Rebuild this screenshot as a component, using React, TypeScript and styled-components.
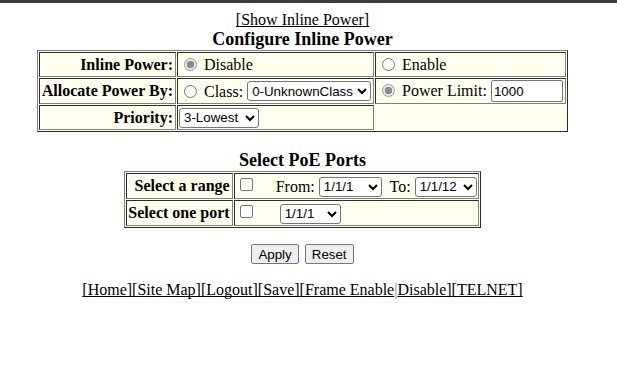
import styled, { createGlobalStyle } from "styled-components";

const GlobalStyle = createGlobalStyle`
  body {
    margin: 0;
    background: #ffffff;
    font-family: "Liberation Serif", "Times New Roman", serif;
    font-size: 16px;
    color: #000000;
  }
`;

const TopBar = styled.div`
  height: 3px;
  background: #3c3c3c;
`;

const Page = styled.div`
  padding: 8px 20px 8px 8px;
  text-align: center;
`;

const NavLink = styled.a`
  color: #000000;
  text-decoration: underline;
  text-decoration-skip-ink: none;
  cursor: pointer;
`;

const Heading = styled.div`
  font-size: 18px;
  font-weight: bold;
`;

const Grid = styled.table`
  margin: 0 auto;
  border: 1px outset #808080;
  border-spacing: 1px;
  background: #fffff0;
  text-align: left;
`;

const Label = styled.th<{ $w?: number; $h: number }>`
  box-sizing: border-box;
  width: ${(p) => (p.$w ? `${p.$w}px` : "auto")};
  height: ${(p) => p.$h}px;
  border: 1px inset #808080;
  padding: 1px 2px 1px 1px;
  text-align: right;
  white-space: nowrap;
`;

const Cell = styled.td<{ $w?: number; $h: number }>`
  box-sizing: border-box;
  width: ${(p) => (p.$w ? `${p.$w}px` : "auto")};
  height: ${(p) => p.$h}px;
  border: 1px inset #808080;
  padding: 1px;
  white-space: nowrap;
`;

const Radio = styled.input.attrs({ type: "radio" })`
  appearance: none;
  width: 13px;
  height: 13px;
  margin: 3px 3px 0 5px;
  border-radius: 50%;
  border: 1px solid #767676;
  background: #ffffff;
  vertical-align: -1px;
  &:checked {
    border-color: #9a9a9a;
    background: radial-gradient(circle, #8c8c8c 0 3.5px, #e8e8e8 4px);
  }
`;

const Check = styled.input.attrs({ type: "checkbox" })`
  appearance: none;
  width: 13px;
  height: 13px;
  margin: 3px 3px 3px 4px;
  border-radius: 2px;
  border: 1px solid #767676;
  background: #ffffff;
  vertical-align: -2px;
`;

const Select = styled.select<{ $w: number }>`
  width: ${(p) => p.$w}px;
  height: 20px;
  font-family: "Liberation Sans", Arial, sans-serif;
  font-size: 13.333px;
  border: 1px solid #767676;
  border-radius: 3px;
  background: #ffffff;
  color: #000000;
  padding: 0;
  vertical-align: 1px;
`;

const TextBox = styled.input`
  width: 72px;
  height: 22px;
  box-sizing: border-box;
  font-family: "Liberation Sans", Arial, sans-serif;
  font-size: 13.333px;
  border: 1px solid #767676;
  border-radius: 2px;
  padding: 1px 2px;
`;

const Gap = styled.div`
  height: 18px;
`;

const Buttons = styled.div`
  display: flex;
  justify-content: center;
  gap: 6px;
  margin-top: 16px;
`;

const Button = styled.button`
  font-family: "Liberation Sans", Arial, sans-serif;
  font-size: 13.333px;
  height: 20px;
  padding: 0 6px;
  background: #efefef;
  border: 1px solid #767676;
  border-radius: 2px;
  color: #000000;
`;

const Footer = styled.div`
  margin-top: 17px;
`;

const Sep = styled.span`
  color: #6a8fbf;
`;

const ports = Array.from({ length: 12 }, (_, i) => `1/1/${i + 1}`);

export default function App() {
  return (
    <>
      <GlobalStyle />
      <TopBar />
      <Page>
        <NavLink>[Show Inline Power]</NavLink>
        <Heading>Configure Inline Power</Heading>
        <Grid>
          <tbody>
            <tr>
              <Label $w={137} $h={25}>Inline Power:</Label>
              <Cell $w={197} $h={25}>
                <Radio name="power" defaultChecked /> Disable
              </Cell>
              <Cell $w={191} $h={25}>
                <Radio name="power" /> Enable
              </Cell>
            </tr>
            <tr>
              <Label $h={26}>Allocate Power By:</Label>
              <Cell $h={26}>
                <Radio name="alloc" /> Class:{" "}
                <Select $w={124} defaultValue="0">
                  <option value="0">0-UnknownClass</option>
                  <option value="1">1-Class1</option>
                  <option value="2">2-Class2</option>
                  <option value="3">3-Class3</option>
                </Select>
              </Cell>
              <Cell $h={26}>
                <Radio name="alloc" defaultChecked /> Power Limit:{" "}
                <TextBox defaultValue="1000" />
              </Cell>
            </tr>
            <tr>
              <Label $h={25}>Priority:</Label>
              <Cell $h={25}>
                <Select $w={80} defaultValue="3">
                  <option value="1">1-Critical</option>
                  <option value="2">2-High</option>
                  <option value="3">3-Lowest</option>
                </Select>
              </Cell>
            </tr>
          </tbody>
        </Grid>
        <Gap />
        <Heading>Select PoE Ports</Heading>
        <Grid>
          <tbody>
            <tr>
              <Label $w={106} $h={26}>Select a range</Label>
              <Cell $w={242} $h={26}>
                <Check />
                {"\u00a0\u00a0\u00a0\u00a0 "}From:{" "}
                <Select $w={63}>
                  {ports.map((p) => (
                    <option key={p}>{p}</option>
                  ))}
                </Select>
                {"\u00a0 "}To:{" "}
                <Select $w={62} defaultValue="1/1/12">
                  {ports.map((p) => (
                    <option key={p}>{p}</option>
                  ))}
                </Select>
              </Cell>
            </tr>
            <tr>
              <Label $h={26}>Select one port</Label>
              <Cell $h={26}>
                <Check />
                {"\u00a0\u00a0\u00a0\u00a0\u00a0 "}
                <Select $w={61}>
                  {ports.map((p) => (
                    <option key={p}>{p}</option>
                  ))}
                </Select>
              </Cell>
            </tr>
          </tbody>
        </Grid>
        <Buttons>
          <Button>Apply</Button>
          <Button>Reset</Button>
        </Buttons>
        <Footer>
          <NavLink>[Home]</NavLink>
          <NavLink>[Site Map]</NavLink>
          <NavLink>[Logout]</NavLink>
          <NavLink>[Save]</NavLink>
          <NavLink>[Frame Enable</NavLink>
          <Sep>|</Sep>
          <NavLink>Disable]</NavLink>
          <NavLink>[TELNET]</NavLink>
        </Footer>
      </Page>
    </>
  );
}
